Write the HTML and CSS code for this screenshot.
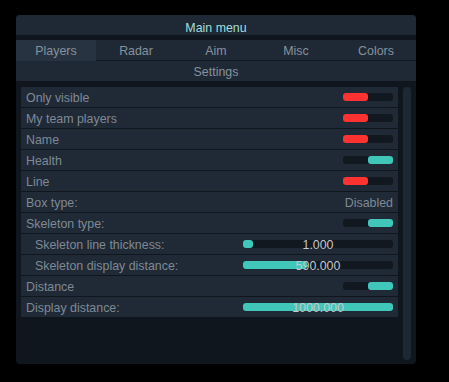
FILE: index.html
```html
<!DOCTYPE html>
<html lang="en">
<head>
    <meta charset="UTF-8">
    <title>Main menu</title>
    <link rel="stylesheet" href="styles.css">
</head>
<body>

    <div class="window">
        <div class="title">Main menu</div>

        <div class="tabs">
            <div class="tab active">Players</div>
            <div class="tab">Radar</div>
            <div class="tab">Aim</div>
            <div class="tab">Misc</div>
            <div class="tab">Colors</div>
        </div>

        <div class="subtitle">Settings</div>

        <div class="content">
            <div class="list">
                <div class="row">
                    <span class="label">Only visible</span>
                    <div class="toggle off"><div class="knob"></div></div>
                </div>
                <div class="row">
                    <span class="label">My team players</span>
                    <div class="toggle off"><div class="knob"></div></div>
                </div>
                <div class="row">
                    <span class="label">Name</span>
                    <div class="toggle off"><div class="knob"></div></div>
                </div>
                <div class="row">
                    <span class="label">Health</span>
                    <div class="toggle on"><div class="knob"></div></div>
                </div>
                <div class="row">
                    <span class="label">Line</span>
                    <div class="toggle off"><div class="knob"></div></div>
                </div>
                <div class="row">
                    <span class="label">Box type:</span>
                    <span class="label">Disabled</span>
                </div>
                <div class="row">
                    <span class="label">Skeleton type:</span>
                    <div class="toggle on"><div class="knob"></div></div>
                </div>
                <div class="row sub">
                    <span class="label">Skeleton line thickness:</span>
                    <div class="slider">
                        <div class="fill" style="width: 10px;"></div>
                        <span class="num">1.000</span>
                    </div>
                </div>
                <div class="row sub">
                    <span class="label">Skeleton display distance:</span>
                    <div class="slider">
                        <div class="fill" style="width: 64px;"></div>
                        <span class="num">590.000</span>
                    </div>
                </div>
                <div class="row">
                    <span class="label">Distance</span>
                    <div class="toggle on"><div class="knob"></div></div>
                </div>
                <div class="row">
                    <span class="label">Display distance:</span>
                    <div class="slider">
                        <div class="fill" style="width: 150px;"></div>
                        <span class="num">1000.000</span>
                    </div>
                </div>
            </div>

            <div class="scrollbar"></div>
        </div>
    </div>

</body>
</html>
```

FILE: styles.css
```css
body {
    font-family: 'Liberation Sans', Arial, sans-serif;
    font-size: 12.4px;
    background-color: #000;
    margin: 0;
    padding: 0;
}

.window {
    width: 400px;
    height: 349px;
    margin: 15px 0 0 16px;
    background-color: #10161e;
    border-radius: 4px;
    display: flex;
    flex-direction: column;
}

.title {
    height: 17px;
    padding-top: 3px;
    line-height: 20px;
    text-align: center;
    color: #a0dfd9;
    background-color: #1f2935;
    border-radius: 4px 4px 0 0;
}

.tabs {
    margin-top: 5px;
    height: 20px;
    display: grid;
    grid-template-columns: repeat(5, 1fr);
    background-color: #1f2935;
}

.tab {
    padding-top: 2px;
    line-height: 19px;
    text-align: center;
    color: #86919d;
}

.tab.active {
    background-color: #273341;
}

.subtitle {
    margin-top: 1px;
    height: 19px;
    padding-top: 1px;
    line-height: 20px;
    text-align: center;
    color: #86919d;
    background-color: #1f2935;
}

.content {
    display: flex;
    gap: 5px;
    padding: 6px 0 0 5px;
}

.list {
    width: 377px;
    display: flex;
    flex-direction: column;
    gap: 1px;
}

.row {
    height: 20px;
    display: flex;
    align-items: center;
    justify-content: space-between;
    padding: 0 5px;
    background-color: #202a36;
    color: #7e8995;
}

.row.sub {
    padding-left: 14px;
}

.label {
    padding-top: 2px;
}

.toggle {
    width: 50px;
    height: 8px;
    border-radius: 3px;
    background-color: #111820;
    display: flex;
}

.toggle .knob {
    width: 25px;
    height: 8px;
    border-radius: 3px;
}

.toggle.off .knob {
    background-color: #ff3232;
}

.toggle.on {
    justify-content: flex-end;
}

.toggle.on .knob {
    background-color: #41c7b9;
}

.slider {
    position: relative;
    width: 150px;
    height: 8px;
    border-radius: 3px;
    background-color: #111820;
}

.slider .fill {
    height: 8px;
    border-radius: 3px;
    background-color: #41c7b9;
}

.slider .num {
    position: absolute;
    left: 0;
    right: 0;
    top: -2px;
    line-height: 14px;
    text-align: center;
    color: #c4c9ce;
}

.scrollbar {
    width: 8px;
    height: 273px;
    border-radius: 4px;
    background-color: #1e2833;
}
```
